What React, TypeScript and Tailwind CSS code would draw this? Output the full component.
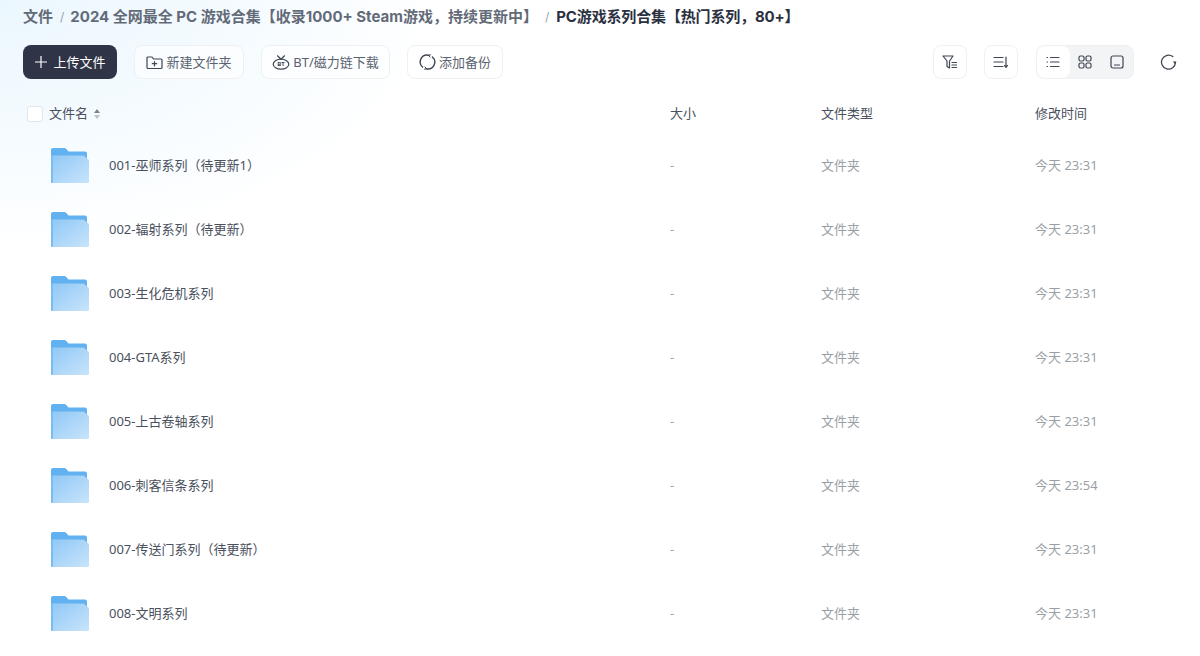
const font = { fontFamily: '"Noto Sans", "Noto Sans CJK SC", sans-serif' };
const crumbFont = { fontFamily: 'Inter, "Noto Sans CJK SC", sans-serif' };

const rows = [
  ["001-巫师系列（待更新1）", "今天 23:31"],
  ["002-辐射系列（待更新）", "今天 23:31"],
  ["003-生化危机系列", "今天 23:31"],
  ["004-GTA系列", "今天 23:31"],
  ["005-上古卷轴系列", "今天 23:31"],
  ["006-刺客信条系列", "今天 23:54"],
  ["007-传送门系列（待更新）", "今天 23:31"],
  ["008-文明系列", "今天 23:31"],
];

function Folder() {
  return (
    <svg width="40" height="37" viewBox="0 0 40 37" className="shrink-0">
      <defs>
        <linearGradient id="fg" x1="0" y1="0" x2="1" y2="1">
          <stop offset="0" stopColor="#8fc8f6" />
          <stop offset="1" stopColor="#c8e4fb" />
        </linearGradient>
      </defs>
      <path d="M1 3a2 2 0 0 1 2-2h11c1.200 0 2 .5 2.800 1.500L18.500 4.500H35a2 2 0 0 1 2 2V12H1z" fill="#62b1f0" />
      <path d="M1 8.500h32.500L39 13v22a1 1 0 0 1-1 1H2a1 1 0 0 1-1-1z" fill="url(#fg)" />
      <path d="M1 9h2v27H2a1 1 0 0 1-1-1z" fill="#7abdf2" />
      <path d="M31 13.500h2v2h-2z" fill="#a9d3f6" />
    </svg>
  );
}

function Btn({ icon, label, w }: { icon: React.ReactNode; label: string; w: string }) {
  return (
    <div className={`h-[34px] ${w} flex items-center justify-center gap-[3px] rounded-lg border border-[#eef0f3] bg-white/60 text-[13px] text-[#5b6270]`}>
      {icon}
      <span className="pt-px">{label}</span>
    </div>
  );
}

function IconBox({ children }: { children: React.ReactNode }) {
  return (
    <div className="w-[34px] h-[34px] flex items-center justify-center rounded-lg border border-[#eef0f3] bg-white">
      {children}
    </div>
  );
}

const s = { fill: "none", stroke: "#3f4552", strokeWidth: 1.2, strokeLinecap: "round" as const, strokeLinejoin: "round" as const };

export default function App() {
  return (
    <div
      className="w-[1200px] h-[656px] overflow-hidden bg-[radial-gradient(ellipse_440px_250px_at_0px_0px,#ebf7fe_0%,#f5fbff_55%,#ffffff_100%)]"
      style={font}
    >
      <div className="h-[45px] pl-[23px] flex items-start pt-[6px] text-[15px] leading-[21px] font-bold whitespace-nowrap" style={crumbFont}>
        <span className="text-[#636a78]">文件</span>
        <span className="text-[#9aa0aa] font-normal text-[12px] ml-[7px] mr-[6px]">/</span>
        <span className="text-[#636a78]">2024 全网最全 PC 游戏合集【收录1000+ Steam游戏，持续更新中】</span>
        <span className="text-[#9aa0aa] font-normal text-[12px] mx-[7px]">/</span>
        <span className="text-[#2b3040] tracking-[-0.15px]">PC游戏系列合集【热门系列，80+】</span>
      </div>

      <div className="h-[34px] pl-[23px] flex items-center">
        <div className="h-[34px] w-[94px] flex items-center justify-center gap-[5px] rounded-lg bg-[#2f3446] text-white text-[13px]">
          <svg width="14" height="14" viewBox="0 0 14 14" fill="none" stroke="#fff" strokeWidth="1.2">
            <path d="M7 1v12M1 7h12" />
          </svg>
          <span className="pt-px">上传文件</span>
        </div>
        <div className="ml-[17px] flex gap-[17px]">
          <Btn
            w="w-[110px]"
            label="新建文件夹"
            icon={
              <svg width="17" height="15" viewBox="0 0 17 15" {...s}>
                <path d="M1 3a1 1 0 0 1 1-1h4l1.500 2H15a1 1 0 0 1 1 1v7.500a1 1 0 0 1-1 1H2a1 1 0 0 1-1-1z" />
                <path d="M8.500 6.500v4.500M6.300 8.700h4.400" />
              </svg>
            }
          />
          <Btn
            w="w-[129px]"
            label="BT/磁力链下载"
            icon={
              <svg width="18" height="15" viewBox="0 0 18 15" {...s}>
                <ellipse cx="9" cy="9.200" rx="7.800" ry="5" />
                <path d="M5.500 .8 9 4.200l3.500-3.400" />
                <text x="9" y="11.300" textAnchor="middle" fontSize="6" fontWeight="700" fill="#3f4552" stroke="none">BT</text>
              </svg>
            }
          />
          <Btn
            w="w-[96px]"
            label="添加备份"
            icon={
              <svg width="17" height="16" viewBox="0 0 17 16" {...s} strokeWidth="1.400">
                <path d="M9.800 1.300A6.800 6.800 0 0 0 3.600 13" />
                <path d="M7.200 14.700A6.800 6.800 0 0 0 13.400 3" />
                <path d="M11.500 .8 9.500 1.400l1.500 1.700M5.500 15.200l2-.6-1.500-1.700" strokeWidth="1" />
              </svg>
            }
          />
        </div>
        <div className="ml-[430px] flex items-center">
          <IconBox>
            <svg width="16" height="16" viewBox="0 0 16 16" {...s}>
              <path d="M1 2h10L7.500 7v7L5 12.500V7z" />
              <path d="M10 8.500h4.500M10 11h4.500M10 13.500h4.500" />
            </svg>
          </IconBox>
          <div className="ml-[17px]">
            <IconBox>
              <svg width="16" height="14" viewBox="0 0 16 14" {...s}>
                <path d="M1 2.500h9M1 7h9M1 11.500h9" />
                <path d="M13 2v10M11.500 10.500 13 12.500l1.500-2" />
              </svg>
            </IconBox>
          </div>
          <div className="ml-[18px] w-[98px] h-[34px] flex rounded-lg bg-[#f3f4f5] border border-[#eef0f3]">
            <div className="w-[33px] h-full rounded-lg bg-white flex items-center justify-center">
              <svg width="14" height="12" viewBox="0 0 14 12" {...s}>
                <path d="M4.500 1.500H13M4.500 6H13M4.500 10.500H13M1 1.500h.5M1 6h.5M1 10.500h.5" />
              </svg>
            </div>
            <div className="w-[32px] h-full flex items-center justify-center">
              <svg width="14" height="14" viewBox="0 0 14 14" {...s}>
                <rect x="1" y="1" width="5" height="5" rx="1.500" />
                <rect x="8" y="1" width="5" height="5" rx="1.500" />
                <rect x="1" y="8" width="5" height="5" rx="1.500" />
                <rect x="8" y="8" width="5" height="5" rx="1.500" />
              </svg>
            </div>
            <div className="w-[32px] h-full flex items-center justify-center">
              <svg width="14" height="14" viewBox="0 0 14 14" {...s}>
                <rect x="1" y="1" width="12" height="12" rx="2" />
                <path d="M4.500 10h5" />
              </svg>
            </div>
          </div>
          <div className="ml-[26px]">
            <svg width="17" height="17" viewBox="0 0 17 17" {...s} strokeWidth="1.300">
              <path d="M12.800 2.600A7 7 0 1 0 15.500 8.500" />
              <path d="M12.900 7.600h3.600L14.700 10z" fill="#3f4552" stroke="none" />
            </svg>
          </div>
        </div>
      </div>

      <div className="mt-[24px] h-[22px] relative flex items-center text-[13px] text-[#4a505d]">
        <div className="w-[670px] pl-[27px] flex items-center">
          <span className="w-[16px] h-[16px] rounded-[3px] border border-[#e3e5e9] bg-white" />
          <span className="ml-[6px]">文件名</span>
          <svg width="8" height="12" viewBox="0 0 8 12" className="ml-[5px]">
            <path d="M4 1 7 5H1z" fill="#7d8390" />
            <path d="M4 11 1 7h6z" fill="#bcc0c7" />
          </svg>
        </div>
        <div className="w-[151px]">大小</div>
        <div className="w-[214px]">文件类型</div>
        <div>修改时间</div>
      </div>

      <div className="mt-[8px]">
        {rows.map(([name, time]) => (
          <div key={name} className="h-[64px] flex items-center text-[13px]">
            <div className="w-[670px] pl-[50px] flex items-center">
              <Folder />
              <span className="ml-[19px] pt-[2px] text-[#4a505d]">{name}</span>
            </div>
            <div className="w-[151px] pt-[2px] text-[#9a9fa8]">-</div>
            <div className="w-[214px] pt-[2px] text-[#9a9fa8]">文件夹</div>
            <div className="pt-[2px] text-[#9a9fa8]">{time}</div>
          </div>
        ))}
      </div>
    </div>
  );
}
